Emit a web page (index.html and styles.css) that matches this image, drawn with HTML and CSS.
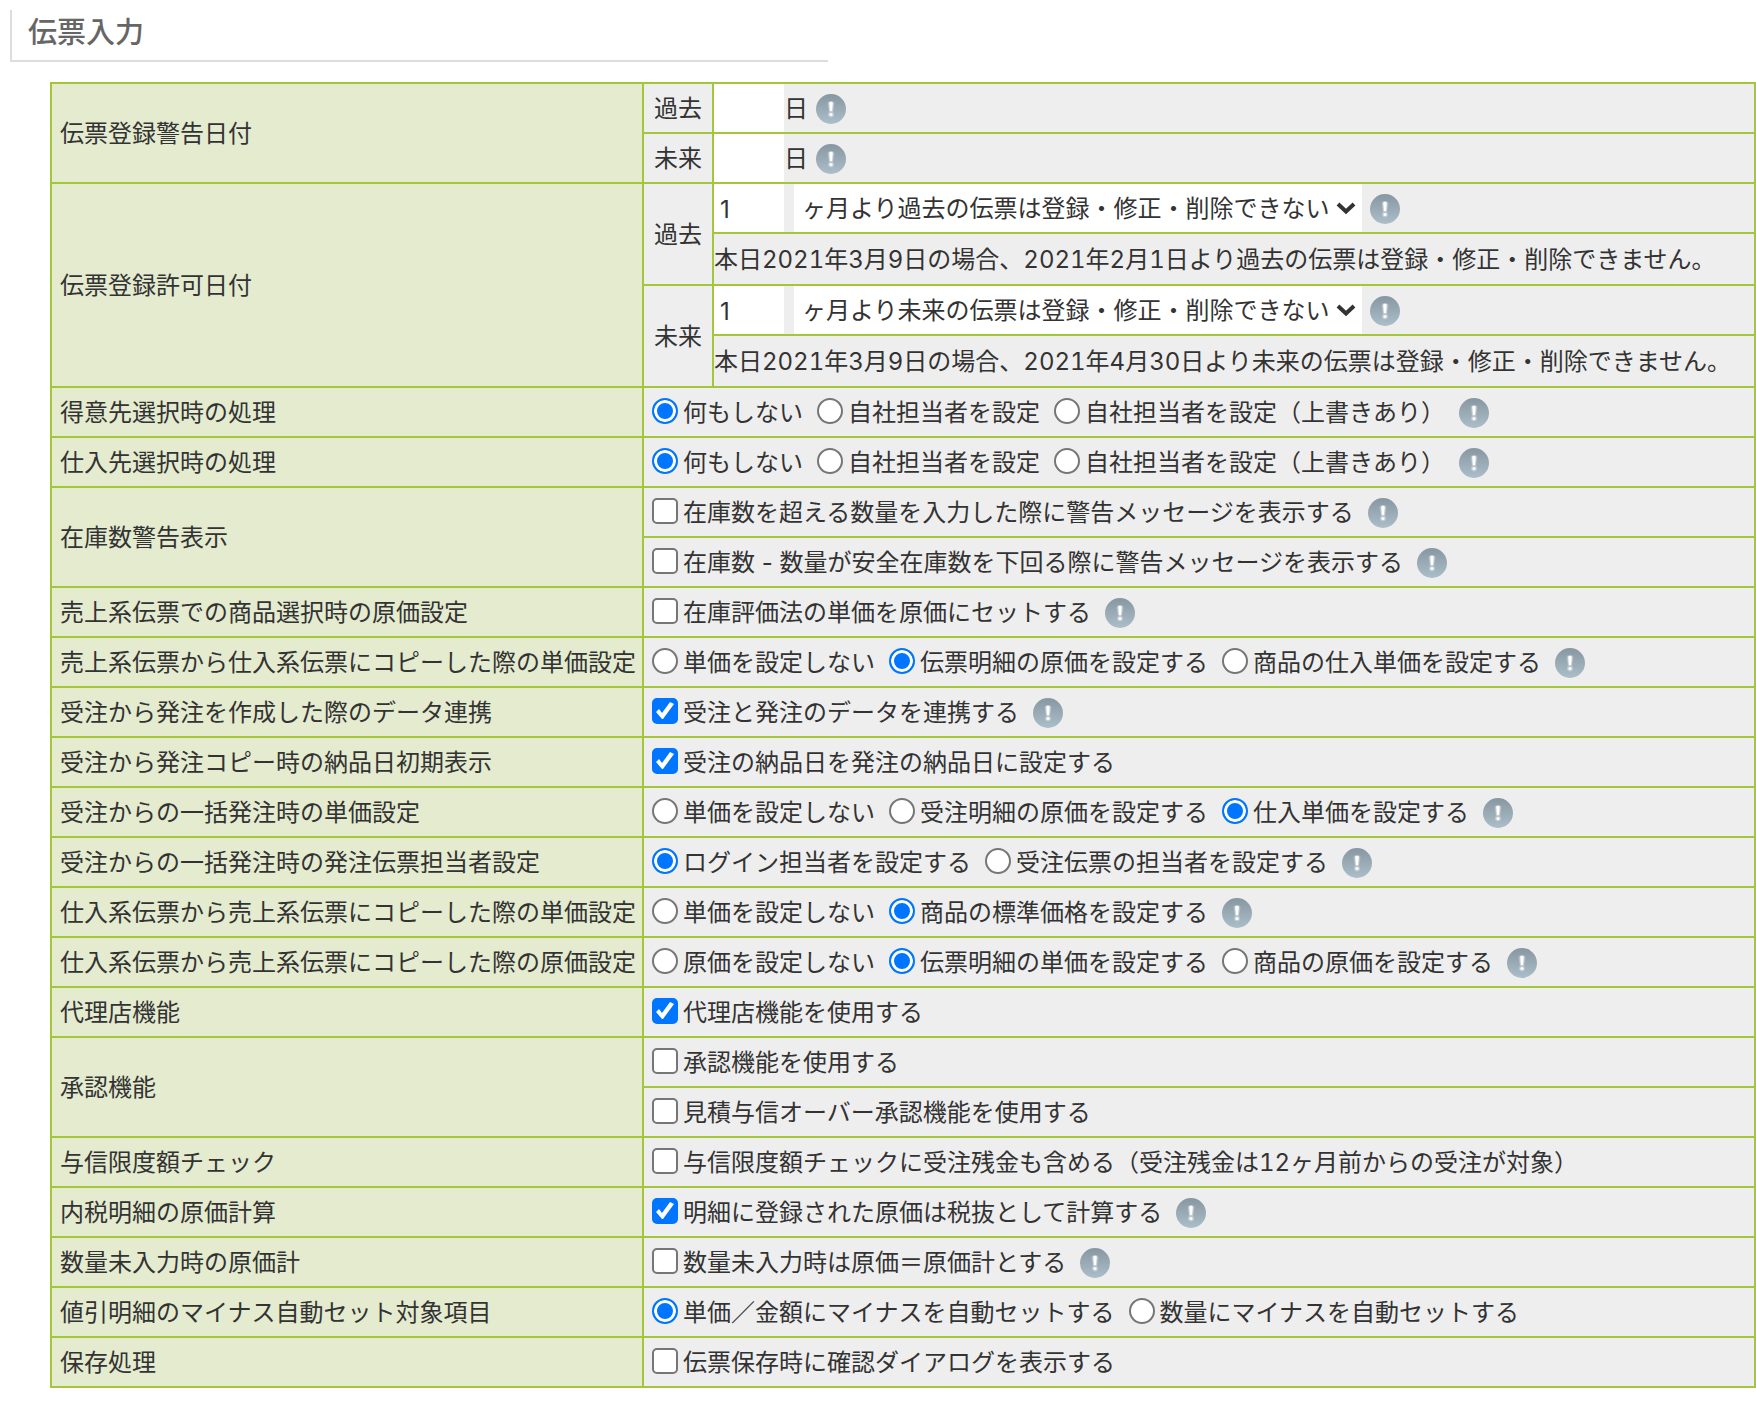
FILE: index.html
```html
<!DOCTYPE html>
<html lang="ja">
<head>
<meta charset="utf-8">
<meta name="viewport" content="width=device-width, initial-scale=1">
<title>伝票入力</title>
<link rel="stylesheet" href="styles.css">
</head>
<body>
<svg class="sprite" aria-hidden="true">
  <defs>
    <linearGradient id="info-fill" x1="0" y1="0" x2="0" y2="1">
      <stop offset="0" stop-color="#8797a1"/>
      <stop offset="1" stop-color="#abbec9"/>
    </linearGradient>
  </defs>
  <symbol id="info" viewBox="0 0 30 30">
    <circle cx="15" cy="15" r="15" fill="url(#info-fill)"/>
    <path d="M11.5 9.5a3.5 2.5 0 0 1 7 0l-1.5 8.5h-4z" fill="#fff" opacity=".3"/>
    <circle cx="15" cy="20.5" r="3" fill="#fff" opacity=".3"/>
    <path d="M13.2 9.3a1.8 1.5 0 0 1 3.6 0l-.6 7.7h-2.4z" fill="#fff"/>
    <circle cx="15" cy="20.5" r="1.6" fill="#fff"/>
  </symbol>
  <symbol id="chevron" viewBox="0 0 20 14">
    <path d="M2 3l8 7.500L18 3" fill="none" stroke="#333" stroke-width="4"/>
  </symbol>
</svg>

<h1 class="title">伝票入力</h1>

<form class="settings">
<table class="grid">
  <colgroup><col class="col-name"><col class="col-sub"><col></colgroup>
  <tbody>
    <tr>
      <th scope="rowgroup" rowspan="2">伝票登録警告日付</th>
      <td class="sub"><label for="warn-past">過去</label></td>
      <td class="flush"><div class="line"><input class="num" id="warn-past" type="text"><span class="unit">日</span><svg class="info near" role="img" aria-label="説明"><use href="#info"/></svg></div></td>
    </tr>
    <tr>
      <td class="sub"><label for="warn-future">未来</label></td>
      <td class="flush"><div class="line"><input class="num" id="warn-future" type="text"><span class="unit">日</span><svg class="info near" role="img" aria-label="説明"><use href="#info"/></svg></div></td>
    </tr>
  </tbody>
  <tbody>
    <tr>
      <th scope="rowgroup" rowspan="4">伝票登録許可日付</th>
      <td class="sub" rowspan="2"><label for="allow-past">過去</label></td>
      <td class="flush"><div class="line"><input class="num" id="allow-past" type="text" value="1"><span class="picker"><select aria-label="過去の単位"><option>ヶ月より過去の伝票は登録・修正・削除できない</option></select><svg class="chevron" aria-hidden="true"><use href="#chevron"/></svg></span><svg class="info near" role="img" aria-label="説明"><use href="#info"/></svg></div></td>
    </tr>
    <tr class="note"><td class="flush">本日2021年3月9日の場合、2021年2月1日より過去の伝票は登録・修正・削除できません。</td></tr>
    <tr>
      <td class="sub" rowspan="2"><label for="allow-future">未来</label></td>
      <td class="flush"><div class="line"><input class="num" id="allow-future" type="text" value="1"><span class="picker"><select aria-label="未来の単位"><option>ヶ月より未来の伝票は登録・修正・削除できない</option></select><svg class="chevron" aria-hidden="true"><use href="#chevron"/></svg></span><svg class="info near" role="img" aria-label="説明"><use href="#info"/></svg></div></td>
    </tr>
    <tr class="note"><td class="flush">本日2021年3月9日の場合、2021年4月30日より未来の伝票は登録・修正・削除できません。</td></tr>
  </tbody>
  <tbody>
    <tr>
      <th scope="row">得意先選択時の処理</th>
      <td colspan="2"><div class="line"><label class="option"><input type="radio" name="customer" checked>何もしない</label><label class="option"><input type="radio" name="customer">自社担当者を設定</label><label class="option"><input type="radio" name="customer">自社担当者を設定（上書きあり）</label><svg class="info" role="img" aria-label="説明"><use href="#info"/></svg></div></td>
    </tr>
    <tr>
      <th scope="row">仕入先選択時の処理</th>
      <td colspan="2"><div class="line"><label class="option"><input type="radio" name="supplier" checked>何もしない</label><label class="option"><input type="radio" name="supplier">自社担当者を設定</label><label class="option"><input type="radio" name="supplier">自社担当者を設定（上書きあり）</label><svg class="info" role="img" aria-label="説明"><use href="#info"/></svg></div></td>
    </tr>
    <tr>
      <th scope="row" rowspan="2">在庫数警告表示</th>
      <td colspan="2"><div class="line"><label class="option"><input type="checkbox">在庫数を超える数量を入力した際に警告メッセージを表示する</label><svg class="info" role="img" aria-label="説明"><use href="#info"/></svg></div></td>
    </tr>
    <tr>
      <td colspan="2"><div class="line"><label class="option"><input type="checkbox">在庫数 - 数量が安全在庫数を下回る際に警告メッセージを表示する</label><svg class="info" role="img" aria-label="説明"><use href="#info"/></svg></div></td>
    </tr>
    <tr>
      <th scope="row">売上系伝票での商品選択時の原価設定</th>
      <td colspan="2"><div class="line"><label class="option"><input type="checkbox">在庫評価法の単価を原価にセットする</label><svg class="info" role="img" aria-label="説明"><use href="#info"/></svg></div></td>
    </tr>
    <tr>
      <th scope="row">売上系伝票から仕入系伝票にコピーした際の単価設定</th>
      <td colspan="2"><div class="line"><label class="option"><input type="radio" name="sales-copy">単価を設定しない</label><label class="option"><input type="radio" name="sales-copy" checked>伝票明細の原価を設定する</label><label class="option"><input type="radio" name="sales-copy">商品の仕入単価を設定する</label><svg class="info" role="img" aria-label="説明"><use href="#info"/></svg></div></td>
    </tr>
    <tr>
      <th scope="row">受注から発注を作成した際のデータ連携</th>
      <td colspan="2"><div class="line"><label class="option"><input type="checkbox" checked>受注と発注のデータを連携する</label><svg class="info" role="img" aria-label="説明"><use href="#info"/></svg></div></td>
    </tr>
    <tr>
      <th scope="row">受注から発注コピー時の納品日初期表示</th>
      <td colspan="2"><div class="line"><label class="option"><input type="checkbox" checked>受注の納品日を発注の納品日に設定する</label></div></td>
    </tr>
    <tr>
      <th scope="row">受注からの一括発注時の単価設定</th>
      <td colspan="2"><div class="line"><label class="option"><input type="radio" name="bulk-price">単価を設定しない</label><label class="option"><input type="radio" name="bulk-price">受注明細の原価を設定する</label><label class="option"><input type="radio" name="bulk-price" checked>仕入単価を設定する</label><svg class="info" role="img" aria-label="説明"><use href="#info"/></svg></div></td>
    </tr>
    <tr>
      <th scope="row">受注からの一括発注時の発注伝票担当者設定</th>
      <td colspan="2"><div class="line"><label class="option"><input type="radio" name="bulk-staff" checked>ログイン担当者を設定する</label><label class="option"><input type="radio" name="bulk-staff">受注伝票の担当者を設定する</label><svg class="info" role="img" aria-label="説明"><use href="#info"/></svg></div></td>
    </tr>
    <tr>
      <th scope="row">仕入系伝票から売上系伝票にコピーした際の単価設定</th>
      <td colspan="2"><div class="line"><label class="option"><input type="radio" name="buy-price">単価を設定しない</label><label class="option"><input type="radio" name="buy-price" checked>商品の標準価格を設定する</label><svg class="info" role="img" aria-label="説明"><use href="#info"/></svg></div></td>
    </tr>
    <tr>
      <th scope="row">仕入系伝票から売上系伝票にコピーした際の原価設定</th>
      <td colspan="2"><div class="line"><label class="option"><input type="radio" name="buy-cost">原価を設定しない</label><label class="option"><input type="radio" name="buy-cost" checked>伝票明細の単価を設定する</label><label class="option"><input type="radio" name="buy-cost">商品の原価を設定する</label><svg class="info" role="img" aria-label="説明"><use href="#info"/></svg></div></td>
    </tr>
    <tr>
      <th scope="row">代理店機能</th>
      <td colspan="2"><div class="line"><label class="option"><input type="checkbox" checked>代理店機能を使用する</label></div></td>
    </tr>
    <tr>
      <th scope="row" rowspan="2">承認機能</th>
      <td colspan="2"><div class="line"><label class="option"><input type="checkbox">承認機能を使用する</label></div></td>
    </tr>
    <tr>
      <td colspan="2"><div class="line"><label class="option"><input type="checkbox">見積与信オーバー承認機能を使用する</label></div></td>
    </tr>
    <tr>
      <th scope="row">与信限度額チェック</th>
      <td colspan="2"><div class="line"><label class="option figures"><input type="checkbox">与信限度額チェックに受注残金も含める（受注残金は12ヶ月前からの受注が対象）</label></div></td>
    </tr>
    <tr>
      <th scope="row">内税明細の原価計算</th>
      <td colspan="2"><div class="line"><label class="option"><input type="checkbox" checked>明細に登録された原価は税抜として計算する</label><svg class="info" role="img" aria-label="説明"><use href="#info"/></svg></div></td>
    </tr>
    <tr>
      <th scope="row">数量未入力時の原価計</th>
      <td colspan="2"><div class="line"><label class="option"><input type="checkbox">数量未入力時は原価＝原価計とする</label><svg class="info" role="img" aria-label="説明"><use href="#info"/></svg></div></td>
    </tr>
    <tr>
      <th scope="row">値引明細のマイナス自動セット対象項目</th>
      <td colspan="2"><div class="line"><label class="option"><input type="radio" name="discount" checked>単価／金額にマイナスを自動セットする</label><label class="option"><input type="radio" name="discount">数量にマイナスを自動セットする</label></div></td>
    </tr>
    <tr>
      <th scope="row">保存処理</th>
      <td colspan="2"><div class="line"><label class="option"><input type="checkbox">伝票保存時に確認ダイアログを表示する</label></div></td>
    </tr>
  </tbody>
</table>
</form>
</body>
</html>
```
FILE: styles.css
```css
* {
  box-sizing: border-box;
}

body {
  margin: 0;
  background: #fff;
  color: #333;
  font-family: Inter, "Noto Sans CJK JP", sans-serif;
  font-size: 24px;
  line-height: 36px;
}

.sprite {
  position: absolute;
  width: 0;
  height: 0;
}

.title {
  max-width: 818px;
  margin: 10px 10px 20px;
  padding: 2px 0 6px 16px;
  border-left: 2px solid #ddd;
  border-bottom: 2px solid #ddd;
  color: #666;
  font-size: 29px;
  font-weight: 500;
  line-height: 42px;
}

.settings {
  margin-left: 50px;
}

.grid {
  width: 100%;
  table-layout: fixed;
  border-collapse: collapse;
}

.col-name {
  width: 592px;
}

.col-sub {
  width: 70px;
}

tr {
  height: 50px;
}

.note {
  height: 52px;
}

.note,
.figures {
  font-variant-numeric: tabular-nums;
}

th,
td {
  border: 2px solid #a4c639;
  padding: 2px 0 0 8px;
  font-weight: 400;
  text-align: left;
  vertical-align: middle;
  white-space: nowrap;
}

th {
  background: #e4ebcf;
}

td {
  background: #eee;
}

td.sub {
  padding: 2px 0 0;
  text-align: center;
}

td.flush {
  padding: 0;
}

.note td.flush {
  padding-top: 2px;
}

.line {
  display: flex;
  align-items: center;
}

.option {
  display: flex;
  align-items: center;
  gap: 5px;
  margin-right: 14px;
}

.option input {
  appearance: none;
  width: 26px;
  height: 26px;
  margin: 0 0 4px;
  border: 2px solid #767676;
  border-radius: 5px;
  background: #fff;
}

.option input[type="radio"] {
  border-radius: 50%;
}

.option input:checked {
  border-color: #0075ff;
  background: #0075ff;
}

.option input[type="radio"]:checked {
  box-shadow: inset 0 0 0 3px #fff;
}

.option input[type="checkbox"]:checked::before {
  content: "";
  display: block;
  width: 22px;
  height: 22px;
  background: #fff;
  clip-path: polygon(2px 12px, 5px 9px, 8px 13px, 16px 2px, 20px 4px, 9px 19px, 8px 19px);
}

.info {
  flex: none;
  width: 30px;
  height: 30px;
}

.unit,
.near {
  margin-top: 2px;
}

.near {
  margin-left: 8px;
}

.num,
select {
  height: 48px;
  border: 0;
  border-radius: 0;
  background: #fff;
  color: inherit;
  font: inherit;
}

.num {
  width: 70px;
  padding: 2px 6px 0;
}

.picker {
  position: relative;
  display: flex;
  margin-left: 10px;
}

select {
  appearance: none;
  width: 568px;
  padding: 2px 8px 0;
}

.chevron {
  position: absolute;
  top: 17px;
  right: 6px;
  width: 20px;
  height: 14px;
  pointer-events: none;
}
```
